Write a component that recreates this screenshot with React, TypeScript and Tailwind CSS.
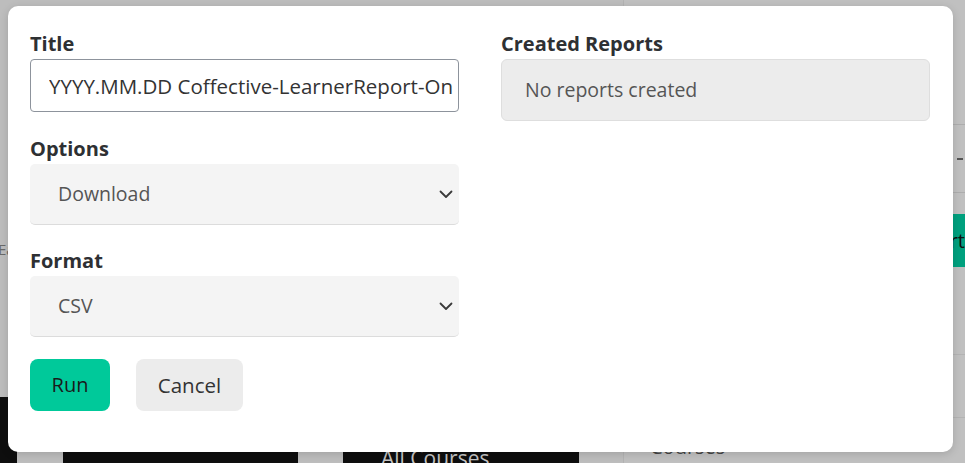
import React from 'react';

const Chevron: React.FC = () => (
  <svg width="14" height="9" viewBox="0 0 14 9" fill="none" className="shrink-0">
    <path d="M1.5 1.5L7 7L12.5 1.5" stroke="#3a3a3a" strokeWidth="1.8" strokeLinecap="round" strokeLinejoin="round" />
  </svg>
);

const FakeSelect: React.FC<{ value: string }> = ({ value }) => (
  <div className="flex h-[61px] items-center justify-between rounded-[5px] border-b border-[#dcdcdc] bg-[#f4f4f4] pl-[28px] pr-[6px] text-[19.5px] text-[#555]">
    <span>{value}</span>
    <Chevron />
  </div>
);

const Label: React.FC<{ children: React.ReactNode }> = ({ children }) => (
  <label className="mb-[3px] block text-[20px] font-bold leading-[24px] text-[#2e3033]">{children}</label>
);

const App: React.FC = () => {
  return (
    <div
      className="relative h-[463px] w-[965px] overflow-hidden bg-[#bdbdbd]"
      style={{ fontFamily: '"Open Sans", "Liberation Sans", sans-serif' }}
    >
      {/* page behind the overlay */}
      <div className="flex h-full">
        <div className="flex w-[623px] flex-col">
          <div className="flex h-[397px] shrink-0 flex-col">
            <div className="-ml-[2px] mt-[240px] text-[15px] leading-[18px] text-[#6a6a6a]">Ea</div>
          </div>
          <div className="flex flex-1">
            <div className="w-[17px] bg-[#0e0e0e]" />
            <div className="mt-[45px] flex flex-1 gap-[45px] pl-[46px]">
              <div className="w-[235px] bg-[#0e0e0e]" />
              <div className="w-[236px] bg-[#0e0e0e] pl-[38px] pt-[4px] text-[21px] leading-[24px] text-[#c4c4c4]">
                All Courses
              </div>
            </div>
          </div>
        </div>
        <div className="flex flex-1 flex-col border-l border-[#b3b3b3] bg-[#c0c0c0]">
          <div className="h-[125px] shrink-0 border-b border-[#adadad]" />
          <div className="flex h-[68px] shrink-0 items-center justify-end border-b border-[#adadad] pr-[2px]">
            <div className="h-[2px] w-[6px] bg-[#555]" />
          </div>
          <div className="mt-[21px] flex h-[53px] shrink-0 items-center justify-end bg-[#00a07e] text-[20px] text-[#111]">
            Create Report
          </div>
          <div className="h-[88px] shrink-0 border-b border-[#b3b3b3]" />
          <div className="h-[63px] shrink-0 border-b border-[#b3b3b3]" />
          <div className="pl-[26px] pt-[14px] text-[20px] text-[#444]">Courses</div>
        </div>
      </div>

      {/* modal */}
      <div className="absolute left-[8px] top-[6px] h-[446px] w-[945px] rounded-[10px] bg-white pl-[22px] pr-[23px] pt-[26px] shadow-[0_2px_8px_rgba(0,0,0,0.15)]">
        <div className="grid grid-cols-2 gap-[42px]">
          <div className="flex flex-col">
            <Label>Title</Label>
            <input
              readOnly
              value="YYYY.MM.DD Coffective-LearnerReport-Onboarding"
              className="h-[53px] w-full rounded-[4px] border border-[#8d939c] bg-white pl-[18px] pr-[4px] text-[20.5px] text-[#333] outline-none"
            />
            <div className="mt-[25px]">
              <Label>Options</Label>
              <FakeSelect value="Download" />
            </div>
            <div className="mt-[24px]">
              <Label>Format</Label>
              <FakeSelect value="CSV" />
            </div>
            <div className="mt-[22px] flex gap-[26px]">
              <button className="h-[52px] w-[80px] rounded-[8px] bg-[#00c99a] text-[20px] text-[#1a1a1a]">Run</button>
              <button className="h-[52px] w-[107px] rounded-[8px] bg-[#ececec] text-[20.5px] text-[#333]">Cancel</button>
            </div>
          </div>
          <div className="flex flex-col">
            <Label>Created Reports</Label>
            <div className="flex h-[62px] items-center rounded-[6px] border border-[#dedede] bg-[#ececec] pl-[23px] text-[19.5px] text-[#555]">
              No reports created
            </div>
          </div>
        </div>
      </div>
    </div>
  );
};

export default App;
